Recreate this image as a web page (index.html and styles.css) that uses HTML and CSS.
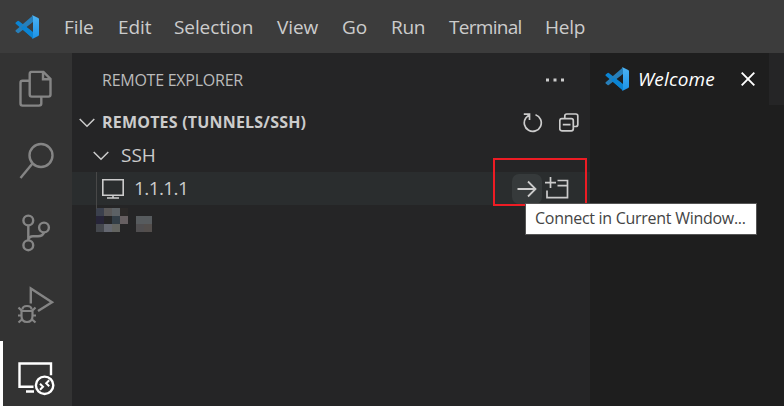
FILE: index.html
```html
<!DOCTYPE html>
<html lang="en">
<head>
<meta charset="utf-8">
<title>Remote Explorer</title>
<link rel="stylesheet" href="styles.css">
</head>
<body>
<svg class="defs" width="0" height="0">
  <defs>
    <linearGradient id="blade" x1="0" y1="0" x2="0" y2="1"><stop offset="0" stop-color="#4db2f2"/><stop offset="1" stop-color="#1b93e8"/></linearGradient>
  </defs>
  <symbol id="logo" viewBox="0 0 24 24">
    <path d="M.700 7.400 2.600 5.900Q3.200 5.500 3.800 6L18 17v6.200q-.7 0-1.300-.6L.700 8.800Q.100 8 .700 7.400Z" fill="#0b84d3"/>
    <path d="M.700 16.600 2.600 18.100Q3.200 18.500 3.800 18L18 7V.8q-.7 0-1.300.6L.700 15.200Q.100 16 .700 16.600Z" fill="#287fb9"/>
    <path d="M9 10.500 18 17.500V23.200L6 12.900Z" fill="#0b84d3"/>
    <path d="M17 23.500Q18 22.900 18 22V2Q18 1 17 .5L17.500.3 23.200 3Q24 3.400 24 4.200V19.800Q24 20.600 23.200 21L18.200 23.500Q17.600 23.800 17 23.500Z" fill="url(#blade)"/>
  </symbol>
</svg>
<div class="window">
  <header class="titlebar">
    <svg class="logo"><use href="#logo"/></svg>
    <nav class="menu">
      <span class="m-file">File</span><span class="m-edit">Edit</span><span class="m-selection">Selection</span><span class="m-view">View</span><span class="m-go">Go</span><span class="m-run">Run</span><span class="m-terminal">Terminal</span><span class="m-help">Help</span>
    </nav>
  </header>
  <main class="workbench">
    <aside class="activitybar">
      <div class="activity"><svg viewBox="0 0 72 72"><path d="M30.500 18.900H43.500L50.500 25.900V41.500Q50.500 43.600 48.400 43.600H31.800Q29.700 43.600 29.700 41.500V21Q29.700 18.900 31.800 18.900M43 19V26.200H50M29 27.700H22.500Q20.500 27.700 20.500 29.700V50.600Q20.500 52.600 22.500 52.600H39Q41.300 52.600 41.300 50.600V44"/></svg></div>
      <div class="activity"><svg viewBox="0 0 72 72"><circle cx="41" cy="30.500" r="11.500"/><path d="M32.500 38.500 20.500 53"/></svg></div>
      <div class="activity"><svg viewBox="0 0 72 72"><circle cx="28.300" cy="23.500" r="4.900"/><circle cx="44" cy="30.500" r="4.900"/><circle cx="28.300" cy="48.300" r="4.900"/><path d="M28.300 28.500V43.300M44 35.500Q42.500 39.300 38 39.300H33Q29 39.300 28.300 43"/></svg></div>
      <div class="activity"><svg viewBox="0 0 72 72"><path d="M30.800 34.500V19.500L52 33.200 38 42"/><g stroke-width="2.200"><path d="M22.500 40.500Q22.500 37 27 37T31.500 40.500M21.500 42H32.500V47Q32.500 53 27 53T21.500 47ZM18.500 38.500 22 42M35.500 38.500 32 42M18 46.500H21.500M32.500 46.500H36M18.500 53.500 22.500 50M35.500 53.500 31.500 50"/></g></svg></div>
      <div class="activity current"><svg viewBox="0 0 72 72"><path d="M33.500 45.800H19.500V22.500H51V34.200M26 50.500H34"/><circle cx="44.600" cy="44.300" r="8.700"/><path d="M40 42.700 43 45.700 40 48.700M49.200 39.300 46.200 42.300 49.200 45.300" stroke-width="2"/></svg></div>
    </aside>
    <section class="sidebar">
      <div class="heading"><span class="caption">REMOTE EXPLORER</span><svg class="more" viewBox="0 0 20 4"><path d="M0 .5h3v3H0zM7.500.5h3v3h-3zM15 .5h3v3h-3z"/></svg></div>
      <div class="row section">
        <svg class="chevron" viewBox="0 0 16 10"><path d="m.7 1 7.300 7.300L15.300 1"/></svg>
        <span class="section-name">REMOTES (TUNNELS/SSH)</span>
        <svg class="refresh" viewBox="0 0 20 20"><path d="M.8 1.200H6.500V7M6.300 1.700 2.800 5A8.500 8.500 0 1 0 12.500 1.800"/></svg>
        <svg class="collapse" viewBox="0 0 20 20"><path d="M5.800 5.500V3Q5.800 1 7.800 1H16.800Q18.800 1 18.800 3V11.500Q18.800 13.500 16.800 13.500H14.500M2.800 5.700H12.300Q14.300 5.700 14.300 7.700V15.800Q14.300 17.800 12.300 17.800H2.800Q.8 17.800.8 15.800V7.700Q.8 5.700 2.800 5.700ZM3.800 11.700H11.500"/></svg>
      </div>
      <div class="row group"><svg class="chevron" viewBox="0 0 16 10"><path d="m.7 1 7.300 7.300L15.300 1"/></svg><span class="group-name">SSH</span></div>
      <div class="row host">
        <svg class="monitor" viewBox="0 0 22 20"><path d="M.8.8H21.200V16.200H.8ZM5 19H17M11 16V19"/></svg>
        <span class="host-name">1.1.1.1</span>
        <span class="connect"><svg viewBox="0 0 20 18"><path d="M.5 9H18.500M11 1.500 18.500 9 11 16.500"/></svg></span>
        <svg class="new-window" viewBox="0 0 24 23"><path d="M5.500 0V11M0 5.700H11M2 13.500V20.700H22.500V3.500H12.500M12.500 8.700H22.500"/></svg>
      </div>
      <div class="redacted">
        <div class="mosaic wide"><i class="a"></i><i class="b"></i><i class="c"></i><i class="d"></i><i class="e"></i><i></i><i class="f"></i><i class="g"></i><i class="h"></i><i class="j"></i><i class="k"></i><i></i></div>
        <div class="mosaic small"><i class="l"></i><i class="l"></i><i class="m"></i><i class="n"></i></div>
      </div>
    </section>
    <section class="editor">
      <div class="tabs"><div class="tab"><svg class="logo"><use href="#logo"/></svg><span class="tab-name">Welcome</span><svg class="close" viewBox="0 0 14 14"><path d="m.7.7 12.600 12.600M13.300.7.7 13.300"/></svg></div></div>
    </section>
  </main>
  <div class="highlight"></div>
  <div class="tooltip"><span>Connect in Current Window...</span></div>
</div>
</body>
</html>
```

FILE: styles.css
```css
* { box-sizing: border-box; }
body { margin: 0; background: #1e1e1e; color: #ccc; font-family: "Open Sans", "Noto Sans", sans-serif; }
svg { display: block; flex: none; fill: none; stroke: currentColor; }
.defs { position: absolute; }
.window { position: relative; width: 784px; height: 406px; overflow: hidden; display: flex; flex-direction: column; }
.titlebar { height: 53px; flex: none; background: #3c3c3c; display: flex; align-items: center; padding-left: 15px; }
.logo { width: 24px; height: 24px; stroke: none; }
.menu { display: flex; margin-left: 25px; font-size: 19px; line-height: 28px; white-space: nowrap; }
.menu span { flex: none; }
.m-file { width: 54px; letter-spacing: -.1px; }
.m-edit { width: 56px; letter-spacing: -.1px; }
.m-selection { width: 103px; letter-spacing: -.1px; }
.m-view { width: 65px; letter-spacing: -.1px; }
.m-go { width: 49px; }
.m-run { width: 58px; letter-spacing: -.3px; }
.m-terminal { width: 96px; letter-spacing: -.7px; }
.m-help { letter-spacing: -.2px; }
.workbench { flex: 1; min-height: 0; display: flex; }
.activitybar { width: 72px; background: #333; color: #858585; flex: none; }
.activity { height: 72px; }
.activity svg { width: 72px; height: 72px; stroke-width: 2.400; }
.activity.current { color: #fff; border-left: 3px solid #fff; }
.current svg { margin-left: -3px; }
.sidebar { width: 518px; background: #252526; flex: none; }
.heading { height: 53px; display: flex; align-items: center; justify-content: space-between; padding: 0 24px 0 30px; font-size: 16px; color: #bbb; }
.caption { letter-spacing: -.25px; }
.more { width: 20px; height: 4px; fill: #ccc; stroke: none; }
.row { height: 33px; display: flex; align-items: center; white-space: nowrap; }
.row > span:not(.connect) { padding-bottom: 2px; }
.chevron { width: 16px; height: 10px; stroke-width: 1.500; }
.section { padding-left: 7px; font-size: 16px; font-weight: 700; }
.section-name { margin-left: 7px; flex: 1; letter-spacing: .2px; }
.refresh { width: 20px; height: 20px; stroke-width: 1.700; }
.collapse { width: 20px; height: 20px; stroke-width: 1.700; margin: 0 11px 0 16px; }
.group { padding-left: 21px; font-size: 19px; }
.group-name { margin-left: 12px; }
.host { background: #2a2d2e; padding-left: 24px; position: relative; font-size: 19px; }
.host::before { content: ""; position: absolute; left: 24px; top: 0; width: 1px; height: 37px; background: #484848; }
.monitor { width: 22px; height: 20px; margin-left: 6px; stroke-width: 1.600; }
.host-name { margin-left: 10px; flex: 1; letter-spacing: -.6px; }
.connect { width: 30px; height: 30px; border-radius: 7px; background: #363a3b; display: grid; place-items: center; margin-right: 3px; }
.connect svg { width: 20px; height: 18px; stroke-width: 1.800; }
.new-window { width: 24px; height: 23px; stroke-width: 1.700; margin-right: 21px; }
.redacted { display: flex; padding: 3px 0 0 24px; gap: 8px; }
.mosaic { display: grid; grid-auto-rows: 8px; }
.wide { grid-template-columns: repeat(4, 8px); }
.small { grid-template-columns: repeat(2, 8px); margin-top: 8px; }
.a { background: #3b404d; } .b { background: #5a5858; } .c { background: #5c6165; } .d { background: #2b2928; }
.e { background: #272539; } .f { background: #333e47; } .g { background: #665f61; }
.h { background: #44474d; } .j { background: #646770; } .k { background: #636460; }
.l { background: #575b5e; } .m { background: #504e50; } .n { background: #534e4c; }
.editor { flex: 1; background: #1e1e1e; }
.tabs { height: 52px; background: #252526; }
.tab { width: 179px; height: 52px; background: #1e1e1e; color: #fff; display: flex; align-items: center; padding-left: 15px; }
.tab-name { width: 103px; margin-left: 9px; font-size: 19px; font-style: italic; letter-spacing: .15px; }
.close { width: 14px; height: 14px; stroke-width: 1.900; }
.highlight { position: absolute; left: 493px; top: 158px; width: 94px; height: 48px; border: 2px solid #ed1c24; }
.tooltip { position: absolute; left: 525px; top: 203px; width: 232px; height: 32px; background: #fff; border: 1px solid #555; color: #444; font-size: 16px; line-height: 29px; padding-left: 9px; white-space: nowrap; letter-spacing: -.28px; }
```
